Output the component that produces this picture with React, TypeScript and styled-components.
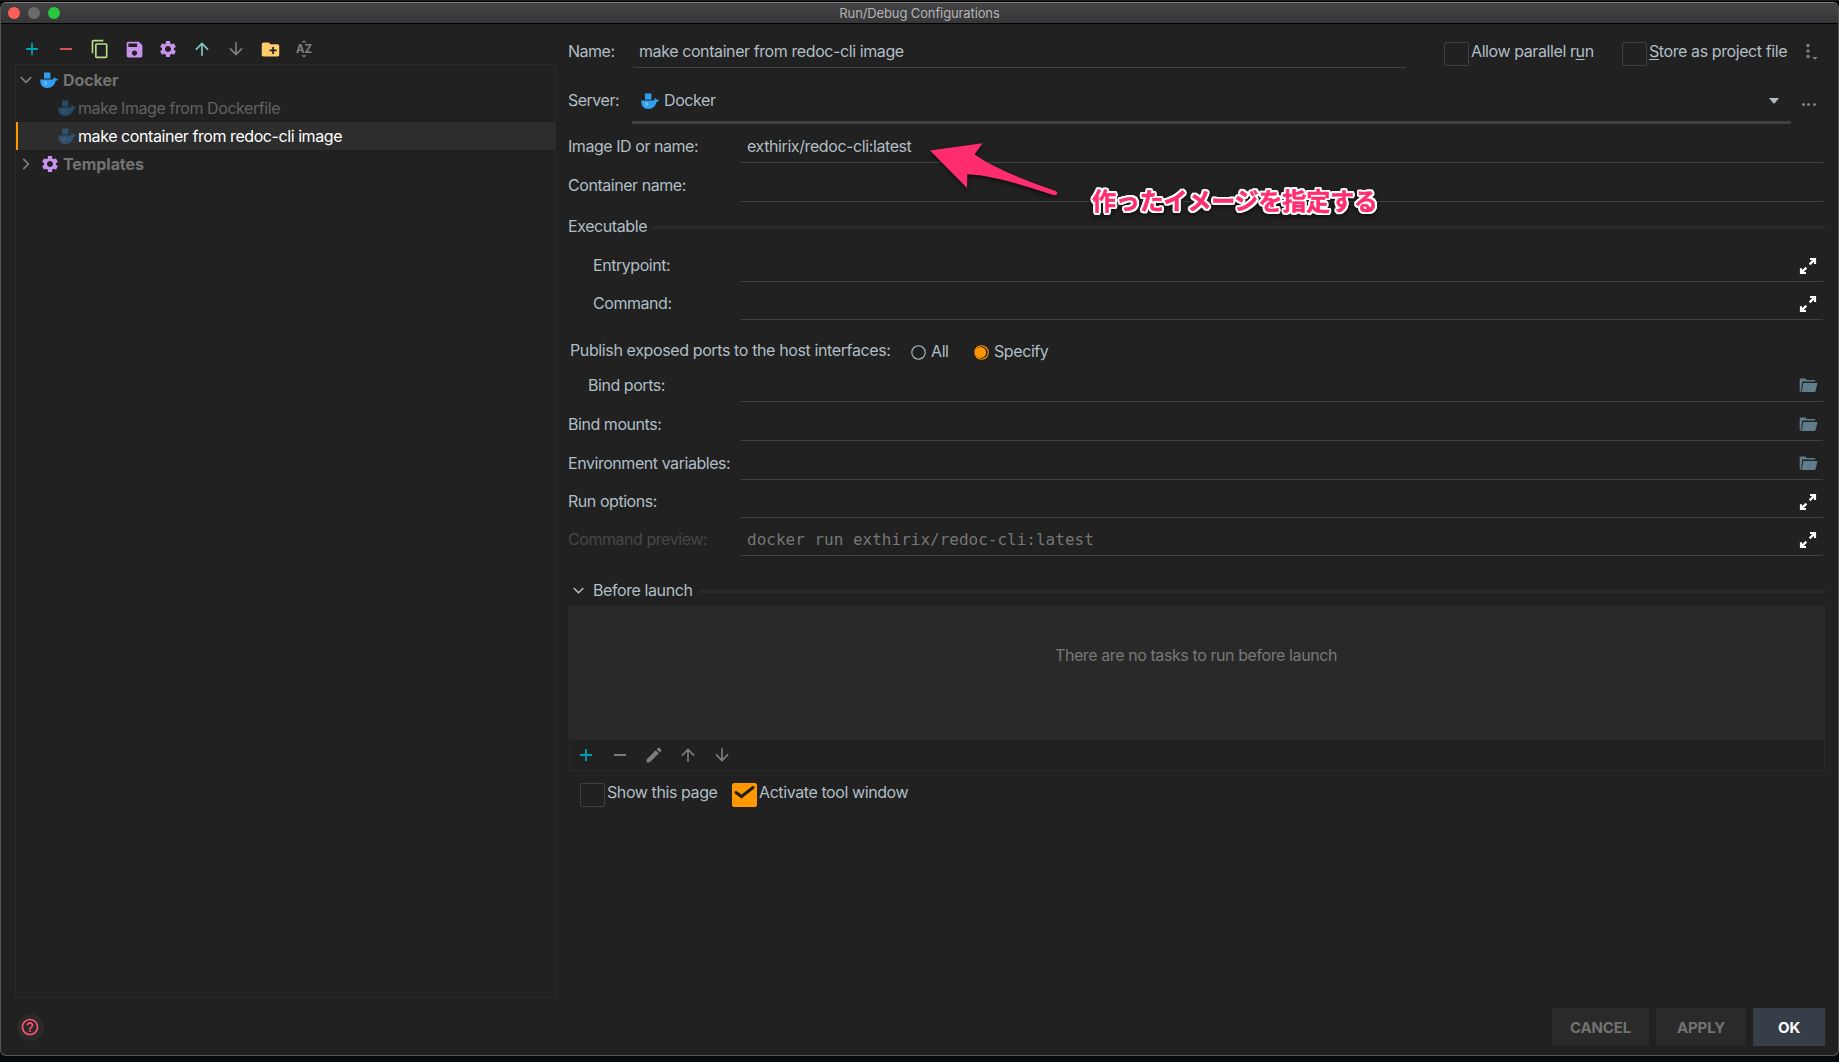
import React from "react";
import styled, { createGlobalStyle } from "styled-components";
import {
  MdSave, MdContentCopy, MdSettings, MdCreateNewFolder, MdEdit,
  MdArrowUpward, MdArrowDownward, MdHelpOutline,
} from "react-icons/md";

const c = {
  bg: "#212121",
  panel: "#292929",
  label: "#b0bec5",
  line: "#424242",
  faint: "#2a2a2a",
  muted: "#727272",
  teal: "#00a0b3",
  orange: "#ff9800",
  purple: "#c792ea",
  slate: "#607d8b",
  pink: "#ff2d6f",
};

const Global = createGlobalStyle`
  * { box-sizing: border-box; }
  body {
    margin: 0;
    background: #04090e;
    font-family: Inter, "Liberation Sans", sans-serif;
    font-size: 16px;
    letter-spacing: -0.41px;
    color: ${c.label};
  }
  svg { display: block; flex: none; }
`;

const Desktop = styled.div`
  position: relative;
  width: 1839px;
  height: 1062px;
  overflow: hidden;
  padding-top: 2px;
  background: linear-gradient(#1c1c1c 0 1px, #000 1px 12px, #04090e 12px);
`;

const Window = styled.div`
  display: flex;
  flex-direction: column;
  height: 1054px;
  border: 1px solid #565656;
  border-top-color: #7c7c7c;
  border-radius: 6px;
  background: ${c.bg};
  overflow: hidden;
`;

const TitleBar = styled.header`
  position: relative;
  display: flex;
  align-items: center;
  justify-content: center;
  height: 21px;
  flex: none;
  background: linear-gradient(#434345, #373739);
  border-bottom: 1px solid #000;
`;

const Title = styled.span`
  font-size: 13px;
  letter-spacing: -0.12px;
  color: #b4b4b4;
`;

const Lights = styled.div`
  position: absolute;
  left: 7px;
  top: 4px;
  display: flex;
  gap: 8px;
`;

const Light = styled.i<{ $color: string }>`
  width: 12px;
  height: 12px;
  border-radius: 50%;
  background: ${(p) => p.$color};
`;

const Body = styled.main`
  display: flex;
  height: 974px;
  flex: none;
  padding: 0 13px 0 14px;
`;

const Sidebar = styled.aside`
  display: flex;
  flex-direction: column;
  width: 541px;
  flex: none;
`;

const Toolbar = styled.div`
  display: flex;
  height: 40px;
  padding-top: 10px;
`;

const ToolButton = styled.span<{ $color: string }>`
  display: flex;
  align-items: center;
  justify-content: center;
  width: 34px;
  height: 30px;
  color: ${(p) => p.$color};
`;

const Tree = styled.div`
  flex: 1;
  padding-top: 1px;
  border: 1px solid ${c.faint};
`;

const TreeRow = styled.div<{ $child?: boolean; $selected?: boolean }>`
  display: flex;
  align-items: center;
  height: 28px;
  padding-left: ${(p) => (p.$child ? 42 : 4)}px;
  background: ${(p) => (p.$selected ? "#2d2d2d" : "transparent")};
  box-shadow: ${(p) => (p.$selected ? `inset 2px 0 ${c.orange}` : "none")};
  color: ${(p) => (p.$selected ? "#fff" : p.$child ? "#626262" : c.muted)};
  font-weight: ${(p) => (p.$child ? 400 : 700)};
  letter-spacing: ${(p) => (p.$child ? -0.43 : -0.07)}px;
`;

const TreeChevron = styled.span`
  width: 20px;
  color: #7d7d7d;
`;

const TreeIcon = styled.span<{ $dim?: boolean }>`
  display: flex;
  width: ${(p) => (p.$dim ? 20 : 23)}px;
  opacity: ${(p) => (p.$dim ? 0.33 : 1)};
  color: ${c.purple};
`;

const Form = styled.section`
  display: flex;
  flex-direction: column;
  flex: 1;
  margin-left: 12px;
  padding-top: 11px;
`;

const HeadRow = styled.div`
  display: flex;
  height: 33px;
  line-height: 32px;
`;

const HeadLabel = styled.label<{ $w: number }>`
  width: ${(p) => p.$w}px;
  flex: none;
  letter-spacing: -0.5px;
`;

const NameField = styled.div`
  width: 773px;
  margin-right: 38px;
  padding-left: 6px;
  border-bottom: 1px solid ${c.line};
`;

const Check = styled.label<{ $w: number }>`
  display: flex;
  gap: 2px;
  width: ${(p) => p.$w}px;
  height: 32px;
  line-height: 32px;
  white-space: nowrap;

  u {
    text-underline-offset: 2px;
    text-decoration-skip-ink: none;
  }
`;

const Box = styled.span<{ $on?: boolean }>`
  display: flex;
  align-items: flex-start;
  justify-content: center;
  width: 25px;
  height: 24px;
  margin-top: 7px;
  border: 1px solid ${(p) => (p.$on ? c.orange : "#404040")};
  border-radius: 2px;
  background: ${(p) => (p.$on ? c.orange : "transparent")};
`;

const Kebab = styled.span`
  padding: 6px 0 0 4px;
`;

const ServerRow = styled.div`
  display: flex;
  height: 56px;
  padding-top: 16px;
  line-height: 32px;
`;

const Combo = styled.div`
  display: flex;
  width: 1159px;
  padding: 0 12px 0 9px;
  border-bottom: 3px solid ${c.line};
`;

const ComboText = styled.span`
  flex: 1;
  margin-left: 4px;
`;

const Caret = styled.span`
  width: 0;
  height: 0;
  margin-top: 14px;
  border: solid transparent;
  border-width: 6px 5.5px 0;
  border-top-color: ${c.label};
`;

const More = styled.span`
  display: flex;
  gap: 2.4px;
  padding: 19px 0 0 11px;
`;

const Dot = styled.i`
  width: 3px;
  height: 3px;
  border-radius: 50%;
  background: #808080;
`;

const FieldRow = styled.div<{ $mt: number }>`
  display: flex;
  height: 33px;
  margin: ${(p) => p.$mt}px 2px 0 0;
  line-height: 32px;
`;

const FieldLabel = styled.label<{ $indent: number; $dim?: boolean }>`
  width: 173px;
  flex: none;
  padding-left: ${(p) => p.$indent}px;
  color: ${(p) => (p.$dim ? "#474747" : c.label)};
  letter-spacing: -0.45px;
`;

const Field = styled.div<{ $mono?: boolean }>`
  display: flex;
  align-items: center;
  justify-content: space-between;
  flex: 1;
  padding: 0 6px;
  border-bottom: 1px solid ${c.line};
  ${(p) => p.$mono && `
    font-family: "DejaVu Sans Mono", monospace;
    letter-spacing: 0;
    color: #767676;
    span { padding-top: 1px; }
  `}
`;

const Section = styled.div<{ $mt: number; $gap: number }>`
  display: flex;
  align-items: center;
  height: 24px;
  margin-top: ${(p) => p.$mt}px;
  line-height: 24px;

  &::after {
    content: "";
    flex: 1;
    height: 3px;
    margin: 3px 0 0 ${(p) => p.$gap}px;
    background: ${c.faint};
  }
`;

const SectionChevron = styled.span`
  width: 25px;
  padding-left: 4.5px;
`;

const PortsRow = styled.div`
  display: flex;
  height: 32px;
  margin: 15px 0 -4px;
  padding-left: 2px;
  line-height: 31px;
`;

const PortsLabel = styled.span`
  width: 341px;
  letter-spacing: -0.38px;
`;

const Radio = styled.label<{ $w: number }>`
  display: flex;
  align-items: center;
  gap: 5px;
  width: ${(p) => p.$w}px;
  line-height: 33px;
  svg { margin-top: 3px; }
`;

const Tasks = styled.div`
  height: 134px;
  margin-top: 4px;
  padding: 37px 1px 0 0;
  background: ${c.panel};
  color: #787878;
  line-height: 24px;
  text-align: center;
`;

const TaskBar = styled.div`
  display: flex;
  height: 31px;
  margin-left: 1px;
  border: solid ${c.faint};
  border-width: 0 1px 1px;

  > :first-child { margin-left: -1px; }
`;

const Checks = styled.div`
  display: flex;
  margin-top: 5px;
  padding-left: 12px;
`;

const Footer = styled.footer`
  display: flex;
  align-items: center;
  gap: 7px;
  height: 38px;
  margin: 10px 13px 0 16px;
`;

const Help = styled.span`
  display: flex;
  align-items: center;
  justify-content: center;
  width: 27px;
  height: 27px;
  margin-right: auto;
  padding: 0 1px 1px 0;
  border-radius: 50%;
  background: #2a2a2a;
  color: #ff5370;
`;

const Button = styled.button<{ $w: number; $primary?: boolean }>`
  width: ${(p) => p.$w}px;
  height: 38px;
  padding: 0;
  border: 0;
  background: ${(p) => (p.$primary ? "#363e49" : "#2a2a2a")};
  color: ${(p) => (p.$primary ? "#fff" : c.muted)};
  font: 700 15px Inter, "Liberation Sans", sans-serif;
  letter-spacing: -0.15px;
`;

const Arrow = styled.svg`
  position: absolute;
  left: 925px;
  top: 138px;
  filter: drop-shadow(0 2px 2px rgba(0, 0, 0, 0.6));
`;

/* A ring of hard white shadows, so the outline stays behind every glyph. */
const outline = Array.from({ length: 16 }, (_, i) => {
  const a = (i * Math.PI) / 8;
  return `${(2.2 * Math.cos(a)).toFixed(2)}px ${(2.2 * Math.sin(a)).toFixed(2)}px 0 #fff`;
}).join(", ");

const Note = styled.div`
  position: absolute;
  left: 1092px;
  top: 182px;
  font: 700 24px/36px "Noto Sans CJK JP", sans-serif;
  letter-spacing: -0.15px;
  white-space: nowrap;
  color: ${c.pink};
  -webkit-text-stroke: 0.5px ${c.pink};
  text-shadow: ${outline};
  filter: drop-shadow(0 2px 2px rgba(0, 0, 0, 0.55));
`;

const Docker = () => (
  <svg width="19" height="17" viewBox="0 0 19 17" fill="#339ff0">
    <rect x="4" y="0.5" width="6.4" height="6" />
    <path d="M0.2 7.4H12.6L13.7 6.6V4.6L15.2 6.2L18.4 7.5L15.4 9.3C14.6 13.3 11.8 15.9 7.4 15.9C2.6 15.9 0 12.6 0.2 7.4Z" />
    <ellipse cx="5.6" cy="11" rx="1.1" ry="1.6" fill="none" stroke="#a9d6fa" strokeWidth="0.7" />
  </svg>
);

const Plus = () => (
  <svg width="12" height="12" viewBox="0 0 12 12" stroke="currentColor" strokeWidth="1.8">
    <path d="M6 0V12M0 6H12" />
  </svg>
);

const Minus = () => (
  <svg width="12" height="12" viewBox="0 0 12 12" stroke="currentColor" strokeWidth="2">
    <path d="M0 6H12" />
  </svg>
);

const SortAZ = () => (
  <svg width="18" height="18" viewBox="0 0 18 18" fill="currentColor">
    <path d="M6.4 2.6L9 0.2L11.6 2.6ZM6.4 15.2L9 17.6L11.6 15.2Z" />
    <text x="9" y="13" textAnchor="middle" fontSize="11.5" fontWeight="700" fontFamily="Inter" letterSpacing="-0.2">AZ</text>
  </svg>
);

const Chevron = ({ right, size = 12 }: { right?: boolean; size?: number }) => (
  <svg width={size} height={size} viewBox="0 0 12 12" fill="none" stroke="currentColor" strokeWidth="1.7">
    <path d={right ? "M3.2 0.8L8.4 6L3.2 11.2" : "M0.8 3.2L6 8.4L11.2 3.2"} />
  </svg>
);

const Expand = () => (
  <svg width="18" height="20" viewBox="0 0 18 20" fill="none" stroke="#fff" strokeWidth="2.2">
    <path d="M11 4H16V9M15.6 4.4L10.6 9.4M2 13.2V18H7M2.4 17.6L7.4 12.6" />
  </svg>
);

const FolderOpen = () => (
  <svg width="18" height="15" viewBox="0 0 18 15" fill={c.slate} overflow="visible">
    <path d="M1.7 0.6H6.4L7.8 1.9H15.4Q16.3 1.9 16.3 2.8V3.6H3.3L2.3 11.5V13.8H1.7Q0.7 13.8 0.7 12.8V1.6Q0.7 0.6 1.7 0.6Z" />
    <path d="M4.2 5H18.5L16.6 13Q16.4 14 15.4 14H2.8Z" />
  </svg>
);

const RadioMark = ({ on }: { on?: boolean }) => (
  <svg width="15" height="15" viewBox="0 0 15 15">
    <circle cx="7.5" cy="7.5" r="6.7" fill="none" stroke={on ? c.orange : c.label} strokeWidth="1.1" />
    {on && <circle cx="6.6" cy="7.4" r="5.5" fill={c.orange} />}
  </svg>
);

const tools: [React.ReactNode, string][] = [
  [<Plus />, c.teal],
  [<Minus />, "#d9504f"],
  [<MdContentCopy size={20} />, "#b9dc86"],
  [<MdSave size={21} />, c.purple],
  [<MdSettings size={20} />, c.purple],
  [<MdArrowUpward size={20} />, "#80cbc4"],
  [<MdArrowDownward size={20} />, "#7d7d7d"],
  [<MdCreateNewFolder size={21} />, "#ffcb6b"],
  [<SortAZ />, "#7d7d7d"],
];

const taskTools: [React.ReactNode, string][] = [
  [<Plus />, c.teal],
  [<Minus />, "#7d7d7d"],
  [<MdEdit size={20} />, "#7d7d7d"],
  [<MdArrowUpward size={20} />, "#7d7d7d"],
  [<MdArrowDownward size={20} />, "#7d7d7d"],
];

type RowProps = { label: string; mt: number; indent?: number; value?: string; icon?: React.ReactNode; dim?: boolean };

const Row = ({ label, mt, indent = 0, value = "", icon, dim }: RowProps) => (
  <FieldRow $mt={mt}>
    <FieldLabel $indent={indent} $dim={dim}>{label}</FieldLabel>
    <Field $mono={dim}>
      <span>{value}</span>
      {icon}
    </Field>
  </FieldRow>
);

export default function App() {
  return (
    <Desktop>
      <Global />
      <Window>
        <TitleBar>
          <Lights>
            <Light $color="#ff5f57" />
            <Light $color="#6b6b6b" />
            <Light $color="#28c840" />
          </Lights>
          <Title>Run/Debug Configurations</Title>
        </TitleBar>
        <Body>
          <Sidebar>
            <Toolbar>
              {tools.map(([icon, color], i) => <ToolButton key={i} $color={color}>{icon}</ToolButton>)}
            </Toolbar>
            <Tree>
              <TreeRow>
                <TreeChevron><Chevron /></TreeChevron>
                <TreeIcon><Docker /></TreeIcon>
                Docker
              </TreeRow>
              <TreeRow $child>
                <TreeIcon $dim><Docker /></TreeIcon>
                make Image from Dockerfile
              </TreeRow>
              <TreeRow $child $selected>
                <TreeIcon $dim><Docker /></TreeIcon>
                make container from redoc-cli image
              </TreeRow>
              <TreeRow>
                <TreeChevron><Chevron right /></TreeChevron>
                <TreeIcon><MdSettings size={20} /></TreeIcon>
                Templates
              </TreeRow>
            </Tree>
          </Sidebar>
          <Form>
            <HeadRow>
              <HeadLabel $w={65}>Name:</HeadLabel>
              <NameField>make container from redoc-cli image</NameField>
              <Check $w={178}><Box /><span>Allow parallel r<u>u</u>n</span></Check>
              <Check $w={178}><Box /><span><u>S</u>tore as project file</span></Check>
              <Kebab>
                <svg width="14" height="20" viewBox="0 0 14 20" fill="#808080">
                  <circle cx="4" cy="4.5" r="1.7" />
                  <circle cx="4" cy="10" r="1.7" />
                  <circle cx="4" cy="15.5" r="1.7" />
                  <path d="M8.3 16H13.7L11 18.8Z" />
                </svg>
              </Kebab>
            </HeadRow>
            <ServerRow>
              <HeadLabel $w={64}>Server:</HeadLabel>
              <Combo>
                <svg width="19" height="32" viewBox="0 -9 19 32"><Docker /></svg>
                <ComboText>Docker</ComboText>
                <Caret />
              </Combo>
              <More><Dot /><Dot /><Dot /></More>
            </ServerRow>
            <Row label="Image ID or name:" mt={6} value="exthirix/redoc-cli:latest" />
            <Row label="Container name:" mt={6} />
            <Section $mt={12} $gap={6}>Executable</Section>
            <Row label="Entrypoint:" mt={11} indent={25} icon={<Expand />} />
            <Row label="Command:" mt={5} indent={25} icon={<Expand />} />
            <PortsRow>
              <PortsLabel>Publish exposed ports to the host interfaces:</PortsLabel>
              <Radio $w={63}><RadioMark />All</Radio>
              <Radio $w={90}><RadioMark on />Specify</Radio>
            </PortsRow>
            <Row label="Bind ports:" mt={6} indent={20} icon={<FolderOpen />} />
            <Row label="Bind mounts:" mt={6} icon={<FolderOpen />} />
            <Row label="Environment variables:" mt={6} icon={<FolderOpen />} />
            <Row label="Run options:" mt={5} icon={<Expand />} />
            <Row label="Command preview:" mt={5} value="docker run exthirix/redoc-cli:latest" icon={<Expand />} dim />
            <Section $mt={22} $gap={7}>
              <SectionChevron><Chevron size={11} /></SectionChevron>
              Before launch
            </Section>
            <Tasks>There are no tasks to run before launch</Tasks>
            <TaskBar>
              {taskTools.map(([icon, color], i) => <ToolButton key={i} $color={color}>{icon}</ToolButton>)}
            </TaskBar>
            <Checks>
              <Check $w={152}><Box />Show this page</Check>
              <Check $w={178}>
                <Box $on>
                  <svg width="21" height="18" viewBox="0 0 21 18" fill="none" stroke="#212121" strokeWidth="3" strokeLinecap="round">
                    <path d="M2 8.5L7.5 12.5L19 3.5" />
                  </svg>
                </Box>
                Activate tool window
              </Check>
            </Checks>
          </Form>
        </Body>
        <Footer>
          <Help><MdHelpOutline size={20} /></Help>
          <Button $w={97}>CANCEL</Button>
          <Button $w={90}>APPLY</Button>
          <Button $w={72} $primary>OK</Button>
        </Footer>
      </Window>
      <Arrow width="140" height="64" viewBox="925 138 140 64" fill={c.pink}>
        <path d="M930 150.5L982.5 143.3L974.5 154.5C994 168 1024 180 1055 190.8Q1058 192 1057 194Q1056 195.8 1053 195C1022 185 994 175.5 967.3 174.3L967 188Z" />
      </Arrow>
      <Note>作ったイメージを指定する</Note>
    </Desktop>
  );
}
